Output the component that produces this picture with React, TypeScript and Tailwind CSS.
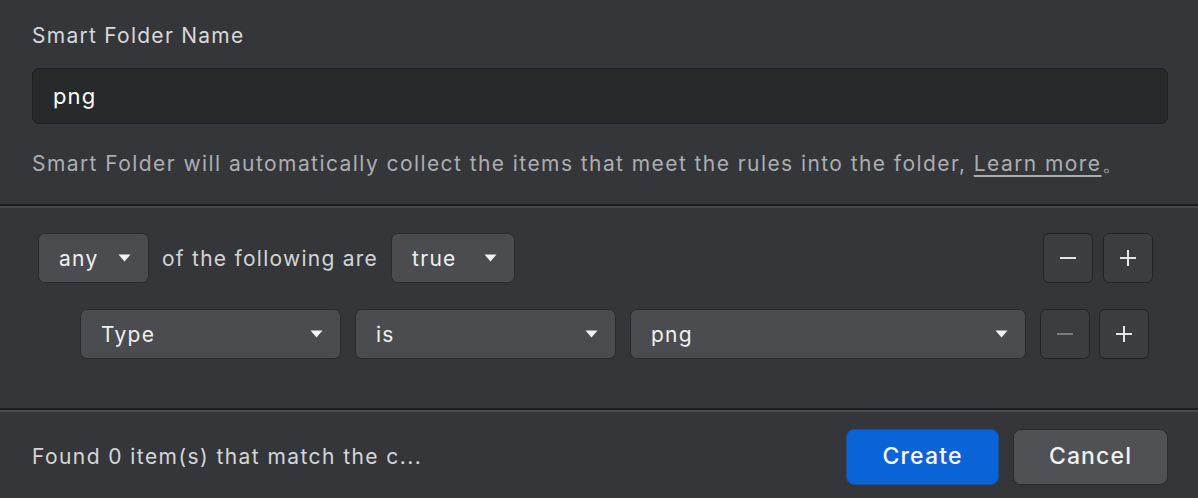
import React from 'react'

const Caret = () => (
    <svg width="13" height="8" viewBox="0 0 13 8" className="shrink-0">
        <path d="M0.5 0.5 H12.5 L6.5 7.5 Z" fill="#f2f2f2" />
    </svg>
)

interface SelectProps {
    label: string
    className?: string
}

const Select = ({ label, className = '' }: SelectProps) => (
    <div className={`h-[50px] flex items-center justify-between pl-[20px] pr-[17px] rounded-[7px] bg-[#4b4c4f] border border-[#2a2b2d] text-[21px] tracking-[0.06em] text-[#f0f0f0] ${className}`}>
        <span className="pt-[2px]">{label}</span>
        <Caret />
    </div>
)

const SquareButton = ({ sign, dim = false }: { sign: '-' | '+', dim?: boolean }) => (
    <div className="w-[50px] h-[50px] flex items-center justify-center rounded-[6px] bg-[#3c3d40] border border-[#232426]">
        <svg width="18" height="18" viewBox="0 0 18 18">
            <path d="M1 9 H17" stroke={dim ? '#7a7b7e' : '#e6e6e6'} strokeWidth="2" />
            {sign === '+' && <path d="M9 1 V17" stroke="#e6e6e6" strokeWidth="2" />}
        </svg>
    </div>
)

const Divider = () => (
    <div className="shrink-0">
        <div className="h-[2px] bg-[#1c1d1f]" />
        <div className="h-[2px] bg-[#46474a]" />
    </div>
)

export default function App() {
    return (
        <div className="w-[1198px] h-[498px] bg-[#35363a] flex flex-col overflow-hidden" style={{ fontFamily: 'Inter, "Noto Sans", sans-serif' }}>
            {/* name + description */}
            <div className="h-[204px] shrink-0 pl-8 pr-[30px] pt-[22px]">
                <div className="text-[21px] leading-[28px] tracking-[0.06em] text-[#d8d8da]">Smart Folder Name</div>
                <div className="mt-[18px] h-[56px] rounded-[7px] bg-[#28292b] border border-[#1e1f21] flex items-center px-5">
                    <span className="text-[22px] tracking-[0.05em] text-white">png</span>
                </div>
                <p className="mt-[26px] text-[21px] leading-[28px] tracking-[0.068em] text-[#adadb0] whitespace-nowrap">
                    Smart Folder will automatically collect the items that meet the rules into the folder, <span className="underline underline-offset-[4px]">Learn more</span>。
                </p>
            </div>

            <Divider />

            {/* rules */}
            <div className="h-[200px] shrink-0 pt-[25px] flex flex-col gap-[26px]">
                <div className="flex items-center pl-[38px] pr-[45px]">
                    <Select label="any" className="w-[111px]" />
                    <span className="mx-[13px] pt-[2px] text-[21px] tracking-[0.06em] text-[#d4d4d6]">of the following are</span>
                    <Select label="true" className="w-[124px]" />
                    <div className="ml-auto flex gap-[10px]">
                        <SquareButton sign="-" />
                        <SquareButton sign="+" />
                    </div>
                </div>
                <div className="flex items-center pl-[80px] pr-[48px] gap-[14px]">
                    <Select label="Type" className="w-[261px]" />
                    <Select label="is" className="w-[261px]" />
                    <Select label="png" className="w-[396px]" />
                    <div className="flex gap-[9px]">
                        <SquareButton sign="-" dim />
                        <SquareButton sign="+" />
                    </div>
                </div>
            </div>

            <Divider />

            {/* footer */}
            <div className="flex-1 flex items-center pl-8 pr-[30px] pt-[3px]">
                <span className="text-[21px] tracking-[0.068em] text-[#d6d6d8]">Found 0 item(s) that match the c...</span>
                <div className="ml-auto flex gap-[14px]">
                    <div className="w-[153px] h-[56px] rounded-[8px] bg-[#0b64d7] border border-[#1a4f99] flex items-center justify-center text-[23px] tracking-[0.05em] font-medium text-white">Create</div>
                    <div className="w-[155px] h-[56px] rounded-[8px] bg-[#505155] border border-[#2a2b2d] flex items-center justify-center text-[23px] tracking-[0.05em] font-medium text-[#f2f2f2]">Cancel</div>
                </div>
            </div>
        </div>
    )
}
